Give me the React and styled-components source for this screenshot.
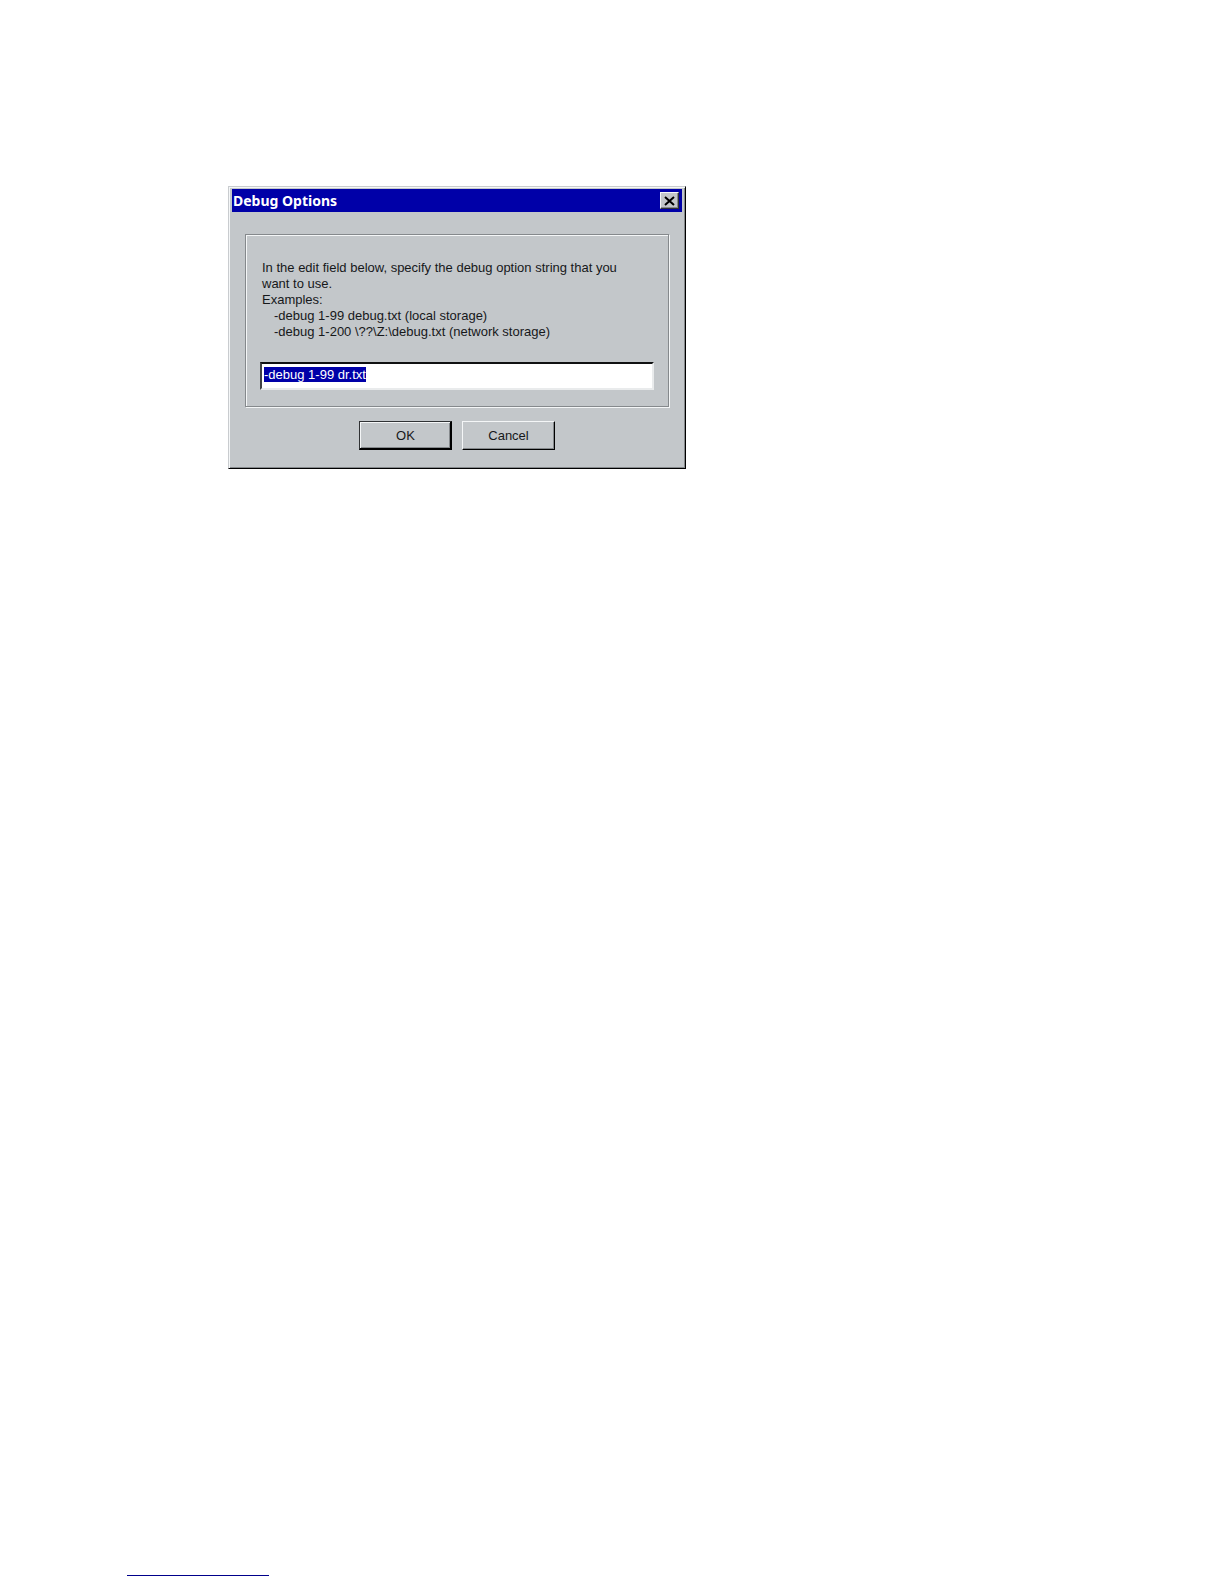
import { useEffect, useRef, useState } from "react";
import styled, { createGlobalStyle, ThemeProvider } from "styled-components";

const theme = {
  face: "#c3c7ca",
  light: "#f4f6f7",
  shadow: "#85898c",
  dark: "#000000",
  navy: "#0000a8",
  text: "#16181a",
};

const GlobalStyle = createGlobalStyle`
  * {
    box-sizing: border-box;
  }
  body {
    margin: 0;
    background: #ffffff;
    font-family: "Liberation Sans", Arial, sans-serif;
    font-size: 13px;
    line-height: 16px;
    color: ${theme.text};
  }
`;

const Page = styled.main`
  min-height: 100vh;
  display: flex;
  flex-direction: column;
  justify-content: space-between;
  gap: 40px;
  padding: 186px 128px 8px 127px;
`;

const Dialog = styled.form`
  width: 100%;
  max-width: 458px;
  margin: 0 0 0 101px;
  padding: 1px 2px 18px;
  background: ${({ theme }) => theme.face};
  border: 1px solid;
  border-color: #c9cccf #000 #000 #c9cccf;
  box-shadow:
    inset 1px 1px 0 ${({ theme }) => theme.light},
    inset -1px -1px 0 ${({ theme }) => theme.shadow};
`;

const TitleBar = styled.header`
  display: flex;
  align-items: center;
  justify-content: space-between;
  height: 23px;
  margin: 1px 1px 0;
  padding: 0 3px 0 1px;
  background: ${({ theme }) => theme.navy};
`;

const Title = styled.h1`
  margin: 0;
  font-family: "Noto Sans", Tahoma, sans-serif;
  font-size: 14px;
  font-weight: 700;
  color: #ffffff;
`;

const CloseButton = styled.button`
  display: grid;
  place-items: center;
  width: 19px;
  height: 17px;
  padding: 0;
  color: ${({ theme }) => theme.dark};
  background: ${({ theme }) => theme.face};
  border: 1px solid;
  border-color: #f4f6f7 #303234 #303234 #f4f6f7;
  box-shadow: inset -1px -1px 0 ${({ theme }) => theme.shadow};
`;

const Group = styled.section`
  margin: 22px 14px 14px;
  padding: 25px 14px 16px 14px;
  border: 1px solid ${({ theme }) => theme.shadow};
  box-shadow:
    inset 1px 1px 0 ${({ theme }) => theme.light},
    1px 1px 0 ${({ theme }) => theme.light};
`;

const Instructions = styled.div`
  margin-bottom: 22px;
  padding: 0 20px 0 2px;
`;

const Prompt = styled.label`
  display: block;
`;

const Examples = styled.ul`
  margin: 0;
  padding: 0 0 0 12px;
  list-style: none;
`;

const TextField = styled.input`
  display: block;
  width: 100%;
  height: 28px;
  padding: 2px 2px 6px;
  font: inherit;
  color: ${({ theme }) => theme.text};
  background: #ffffff;
  border: 2px solid;
  border-color: #101112 #e9ebec #e9ebec #404244;
  border-radius: 0;
  outline: none;

  &::selection {
    color: #ffffff;
    background: ${({ theme }) => theme.navy};
  }
`;

const Actions = styled.div`
  display: flex;
  justify-content: center;
  gap: 10px;
`;

const Button = styled.button`
  width: 93px;
  height: 29px;
  padding: 0;
  font: inherit;
  color: ${({ theme }) => theme.text};
  background: ${({ theme }) => theme.face};
  border: 1px solid;
  border-color: ${({ $primary }) =>
    $primary ? "#303234 #000 #000 #303234" : "#f4f6f7 #000 #000 #f4f6f7"};
  box-shadow: ${({ $primary }) =>
    $primary
      ? "inset -1px -1px 0 #000, inset 1px 1px 0 #f4f6f7, inset -2px -2px 0 #85898c"
      : "inset -1px -1px 0 #85898c"};
`;

const FooterRule = styled.hr`
  width: 142px;
  margin: 0;
  border: 0;
  border-top: 1px solid #00008b;
`;

const App = () => {
  const [value, setValue] = useState("-debug 1-99 dr.txt");
  const field = useRef(null);

  useEffect(() => {
    field.current.focus();
    field.current.select();
  }, []);

  return (
    <ThemeProvider theme={theme}>
      <GlobalStyle />
      <Page>
        <Dialog onSubmit={(e) => e.preventDefault()}>
          <TitleBar>
            <Title>Debug Options</Title>
            <CloseButton type="button">
              <svg width="11" height="10" viewBox="0 0 11 10">
                <path
                  d="M1 1L10 9M10 1L1 9"
                  fill="none"
                  stroke="currentColor"
                  strokeWidth="2"
                />
              </svg>
            </CloseButton>
          </TitleBar>
          <Group>
            <Instructions>
              <Prompt htmlFor="debug-string">
                In the edit field below, specify the debug option string that
                you want to use.
              </Prompt>
              <div>Examples:</div>
              <Examples>
                <li>-debug 1-99 debug.txt (local storage)</li>
                <li>-debug 1-200 \??\Z:\debug.txt (network storage)</li>
              </Examples>
            </Instructions>
            <TextField
              id="debug-string"
              type="text"
              ref={field}
              value={value}
              spellCheck={false}
              onChange={(e) => setValue(e.target.value)}
            />
          </Group>
          <Actions>
            <Button type="submit" $primary>
              OK
            </Button>
            <Button type="button">Cancel</Button>
          </Actions>
        </Dialog>
        <FooterRule />
      </Page>
    </ThemeProvider>
  );
};

export default App;
